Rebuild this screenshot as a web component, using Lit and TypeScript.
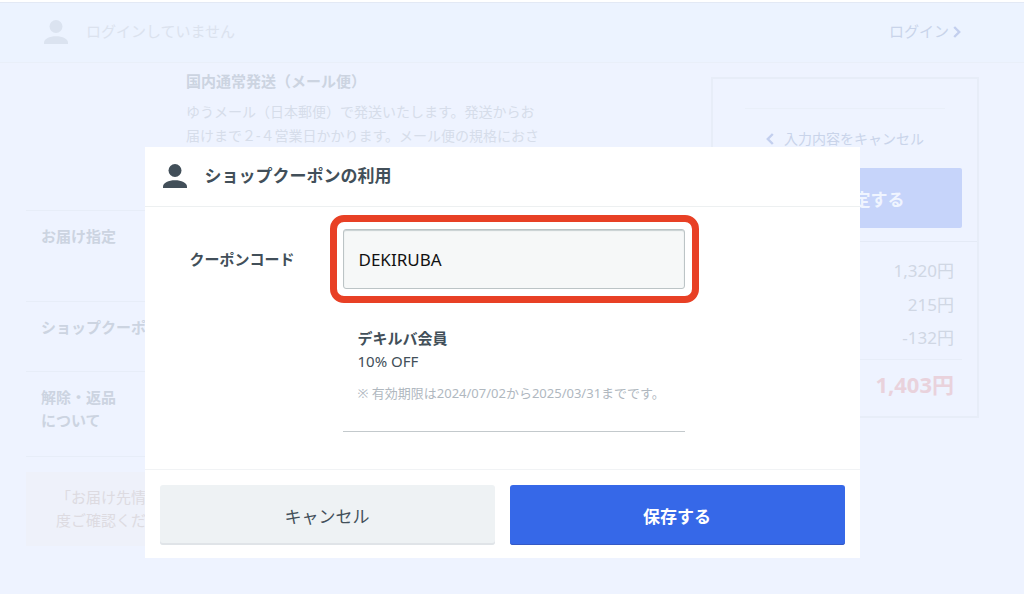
import { LitElement, html, css } from "lit";
import { customElement, state } from "lit/decorators.js";

const person = html`<svg class="person" viewBox="0 0 24 24" aria-hidden="true">
  <circle cx="12" cy="6.5" r="6.5"></circle>
  <path d="M0 24v-1.2C0 18.6 5.6 16.2 12 16.2s12 2.4 12 6.600V24z"></path>
</svg>`;

@customElement("checkout-page")
class CheckoutPage extends LitElement {
  static styles = css`
    :host {
      display: block;
      color: #d0d7e4;
      font-size: 15px;
      line-height: 23px;
    }
    * {
      box-sizing: border-box;
    }
    .bar {
      display: flex;
      align-items: center;
      gap: 18px;
      height: 61px;
      margin-top: 2px;
      padding: 0 63px 2px 44px;
      background: #ecf3ff;
      border-top: 1px solid #e3e9f5;
      border-bottom: 1px solid #e9eff9;
      color: #dbe2ee;
    }
    .person {
      width: 24px;
      height: 24px;
      fill: #dbe3f0;
    }
    .grow {
      flex: 1;
    }
    a {
      display: inline-flex;
      align-items: center;
      color: #c9d4ea;
      text-decoration: none;
    }
    .chev {
      width: 8px;
      height: 12px;
      fill: none;
      stroke: #c3cfee;
      stroke-width: 2.4;
    }
    .login {
      gap: 4px;
    }
    .columns {
      display: flex;
      align-items: flex-start;
      justify-content: space-between;
      padding: 0 45px 0 26px;
    }
    .main {
      width: 555px;
    }
    .row {
      display: grid;
      grid-template-columns: 145px 1fr;
      padding: 14px 0 0 15px;
      border-bottom: 1px solid #e7edf8;
    }
    .row.ship {
      height: 148px;
      padding-top: 7px;
    }
    .row.date {
      height: 91px;
    }
    .row.coupon {
      height: 70px;
    }
    .row.cancel {
      height: 85px;
    }
    h2 {
      margin: 0;
      font-size: 15px;
      font-weight: 700;
      color: #ccd4e1;
      white-space: nowrap;
    }
    .text {
      margin: 7px 0 0;
      width: 364px;
      font-size: 14px;
      line-height: 24px;
      color: #d6ddea;
    }
    .notice {
      margin: 15px 0 0;
      padding: 14px 30px;
      background: #eef1fa;
      color: #dddbe1;
    }
    .side {
      width: 268px;
      margin-top: 14px;
      border: 2px solid #e7edf8;
    }
    .actions {
      padding: 29px 15px 13px;
      border-bottom: 1px solid #e4eaf6;
    }
    .back {
      display: flex;
      justify-content: center;
      gap: 10px;
      margin: 0 17px;
      padding: 18px 0;
      border-top: 1px solid #e9eff9;
      font-size: 14px;
    }
    .confirm {
      display: block;
      width: 100%;
      height: 60px;
      border: 0;
      border-radius: 2px;
      background: #c6d4fa;
      color: #f0f5ff;
      font-family: inherit;
      font-size: 17px;
      font-weight: 700;
    }
    table {
      width: calc(100% - 30px);
      margin: 11px 15px 7px;
      border-collapse: collapse;
      font-size: 17px;
    }
    td {
      height: 34px;
      padding: 0 8px;
      text-align: right;
    }
    .last td {
      height: 38px;
      padding-bottom: 4px;
    }
    .total td {
      height: 50px;
      border-top: 1px solid #e7edf8;
      color: #e9d2dc;
      font-size: 22px;
      font-weight: 700;
    }
  `;

  render() {
    return html`
      <header class="bar">
        ${person}<span class="grow">ログインしていません</span>
        <a class="login" href="#"
          >ログイン<svg class="chev" viewBox="0 0 8 12"><path d="M1.2 1l5 5-5 5"></path></svg
        ></a>
      </header>
      <div class="columns">
        <div class="main">
          <section class="row ship">
            <span></span>
            <div>
              <h2>国内通常発送（メール便）</h2>
              <p class="text">
                ゆうメール（日本郵便）で発送いたします。発送からお<br />届けまで２-４営業日かかります。メール便の規格におさ
              </p>
            </div>
          </section>
          <section class="row date"><h2>お届け指定</h2></section>
          <section class="row coupon"><h2>ショップクーポン</h2></section>
          <section class="row cancel"><h2>解除・返品<br />について</h2></section>
          <p class="notice">「お届け先情報」<br />度ご確認ください</p>
        </div>
        <aside class="side">
          <div class="actions">
            <a class="back" href="#"
              ><svg class="chev" viewBox="0 0 8 12"><path d="M6.8 1l-5 5 5 5"></path></svg
              >入力内容をキャンセル</a
            >
            <button class="confirm" type="button">注文を確定する</button>
          </div>
          <table>
            <tbody>
              <tr><td>1,320円</td></tr>
              <tr><td>215円</td></tr>
              <tr class="last"><td>-132円</td></tr>
              <tr class="total"><td>1,403円</td></tr>
            </tbody>
          </table>
        </aside>
      </div>
    `;
  }
}

@customElement("coupon-dialog")
class CouponDialog extends LitElement {
  @state() code = "DEKIRUBA";

  static styles = css`
    :host {
      display: block;
      background: #fff;
      color: #424f59;
      font-size: 15px;
      line-height: 23px;
    }
    * {
      box-sizing: border-box;
    }
    .head {
      display: flex;
      align-items: center;
      gap: 18px;
      height: 60px;
      padding: 0 18px 2px;
      border-bottom: 1px solid #edf0f1;
    }
    .person {
      width: 24px;
      height: 24px;
      fill: #424f59;
    }
    h1 {
      margin: 0;
      font-size: 17px;
      line-height: 24px;
    }
    .body {
      display: grid;
      grid-template-columns: 140px 369px;
      justify-content: start;
      padding: 8px 18px 37px 45px;
    }
    label {
      padding-top: 33px;
      font-weight: 700;
    }
    .ring {
      border: 7px solid #e84025;
      border-radius: 14px;
      padding: 7px 7px 7px 6px;
    }
    input {
      display: block;
      width: 100%;
      height: 60px;
      padding: 0 15px;
      border: 1px solid #bcc4c6;
      border-radius: 3px;
      box-shadow: inset 0 1px 1px #c8d0d1;
      background: #f6f8f8;
      color: #111;
      font-family: inherit;
      font-size: 17px;
      outline: none;
    }
    .detail {
      margin: 0 14px 0 13px;
      padding: 24px 15px 26px;
      border-bottom: 1px solid #c3c9cc;
    }
    p {
      margin: 0;
    }
    .name {
      font-weight: 700;
    }
    .limit {
      margin-top: 9px;
      color: #b0b8bf;
      font-size: 13px;
      white-space: nowrap;
    }
    .foot {
      display: grid;
      grid-template-columns: 1fr 1fr;
      gap: 15px;
      padding: 15px 15px 13px;
      border-top: 1px solid #f1f3f5;
    }
    button {
      height: 60px;
      border: 0;
      border-radius: 3px;
      background: #eef2f4;
      box-shadow: inset 0 -2px 0 #e0e4e8;
      color: #424f59;
      font-family: inherit;
      font-size: 17px;
    }
    .save {
      background: #3668e8;
      box-shadow: inset 0 -1px 0 #3559c4;
      color: #fff;
      font-weight: 700;
    }
  `;

  render() {
    return html`
      <header class="head">${person}<h1>ショップクーポンの利用</h1></header>
      <div class="body">
        <label for="code">クーポンコード</label>
        <div>
          <div class="ring">
            <input
              id="code"
              type="text"
              .value=${this.code}
              @input=${(e: Event) => (this.code = (e.target as HTMLInputElement).value)}
            />
          </div>
          <div class="detail">
            <p class="name">デキルバ会員</p>
            <p>10% OFF</p>
            <p class="limit">※ 有効期限は2024/07/02から2025/03/31までです。</p>
          </div>
        </div>
      </div>
      <footer class="foot">
        <button type="button">キャンセル</button>
        <button class="save" type="button">保存する</button>
      </footer>
    `;
  }
}

@customElement("app-root")
class AppRoot extends LitElement {
  static styles = css`
    :host {
      display: flow-root;
      position: relative;
      min-height: 100vh;
      background: linear-gradient(#fff 2px, #eef3ff 2px);
      font-family: "Noto Sans", "Noto Sans CJK JP", sans-serif;
    }
    .overlay {
      position: absolute;
      inset: 0;
      display: flex;
      align-items: flex-start;
      justify-content: center;
      padding: 147px 20px 0 0;
    }
    .dialog {
      width: 715px;
      max-width: 100%;
    }
  `;

  render() {
    return html`
      <checkout-page></checkout-page>
      <div class="overlay">
        <coupon-dialog class="dialog" role="dialog" aria-modal="true"></coupon-dialog>
      </div>
    `;
  }
}
